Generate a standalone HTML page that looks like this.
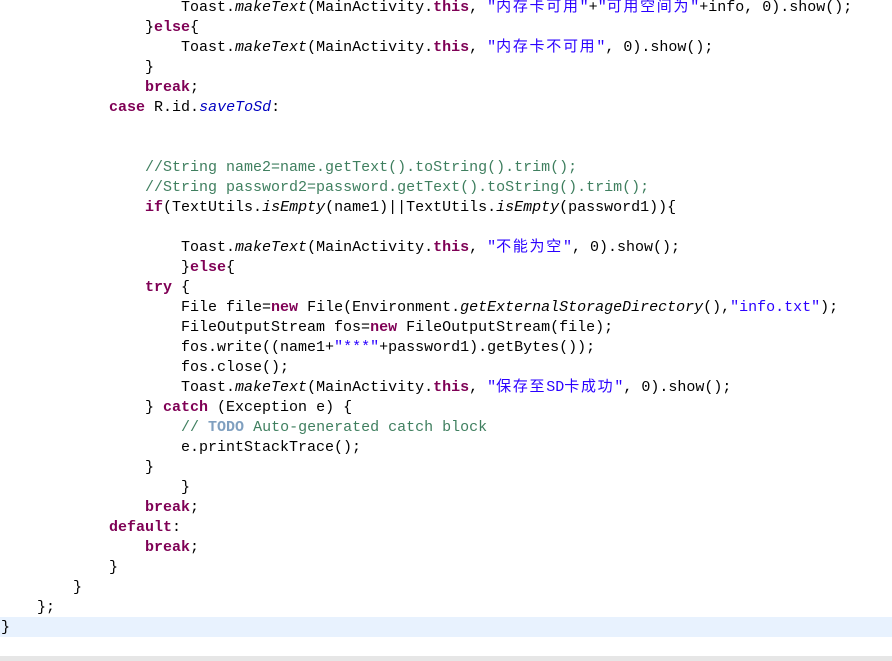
<!DOCTYPE html>
<html><head><meta charset="utf-8"><style>
html,body{margin:0;padding:0;background:#fff;width:892px;height:661px;overflow:hidden;position:relative}
pre{margin:0;position:absolute;left:1px;top:-2px;font-family:"Liberation Mono","Noto Sans CJK SC",monospace;font-size:15px;line-height:20px;color:#000}
.k{color:#7f0055;font-weight:bold}
.s{color:#2a00ff}
.z{letter-spacing:1.7px}
.c{color:#3f7f5f}
.t{color:#7f9fbf;font-weight:bold}
i{font-style:italic}
.f{color:#0000c0;font-style:italic}
#hl{position:absolute;left:0;top:617px;width:892px;height:20px;background:#e8f2fe}
#bar{position:absolute;left:0;top:656px;width:892px;height:5px;background:#e6e6e6}
</style></head><body>
<div id="hl"></div><div id="bar"></div>
<pre>                    Toast.<i>makeText</i>(MainActivity.<span class="k">this</span>, <span class="s">"<span class="z">内存卡可用</span>"</span>+<span class="s">"<span class="z">可用空间为</span>"</span>+info, 0).show();
                }<span class="k">else</span>{
                    Toast.<i>makeText</i>(MainActivity.<span class="k">this</span>, <span class="s">"<span class="z">内存卡不可用</span>"</span>, 0).show();
                }
                <span class="k">break</span>;
            <span class="k">case</span> R.id.<span class="f">saveToSd</span>:


                <span class="c">//String name2=name.getText().toString().trim();</span>
                <span class="c">//String password2=password.getText().toString().trim();</span>
                <span class="k">if</span>(TextUtils.<i>isEmpty</i>(name1)||TextUtils.<i>isEmpty</i>(password1)){

                    Toast.<i>makeText</i>(MainActivity.<span class="k">this</span>, <span class="s">"<span class="z">不能为空</span>"</span>, 0).show();
                    }<span class="k">else</span>{
                <span class="k">try</span> {
                    File file=<span class="k">new</span> File(Environment.<i>getExternalStorageDirectory</i>(),<span class="s">"info.txt"</span>);
                    FileOutputStream fos=<span class="k">new</span> FileOutputStream(file);
                    fos.write((name1+<span class="s">"***"</span>+password1).getBytes());
                    fos.close();
                    Toast.<i>makeText</i>(MainActivity.<span class="k">this</span>, <span class="s">"<span class="z">保存至</span>SD<span class="z">卡成功</span>"</span>, 0).show();
                } <span class="k">catch</span> (Exception e) {
                    <span class="c">// <span class="t">TODO</span> Auto-generated catch block</span>
                    e.printStackTrace();
                }
                    }
                <span class="k">break</span>;
            <span class="k">default</span>:
                <span class="k">break</span>;
            }
        }
    };
}</pre>
</body></html>
